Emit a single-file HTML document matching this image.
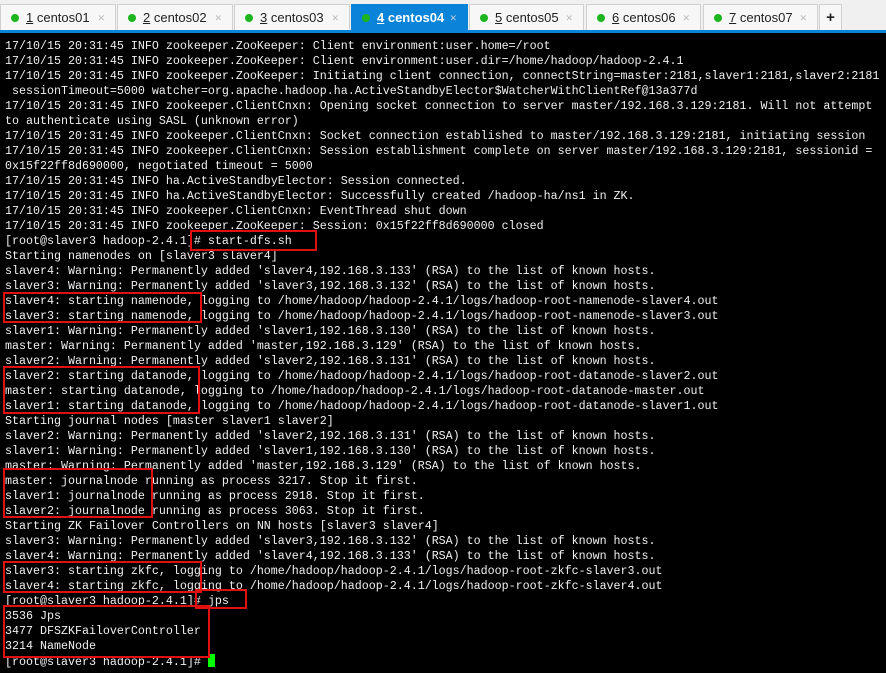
<!DOCTYPE html>
<html><head><meta charset="utf-8"><style>
body{margin:0;width:886px;height:673px;overflow:hidden;background:#000;position:relative;font-family:"Liberation Sans",sans-serif}
.bar{position:absolute;left:0;top:0;width:886px;height:30px;background:#f0f0f0}
.tab{position:absolute;top:4px;height:26px;background:#f7f7f7;border:1px solid #d0d0d0;border-bottom:none;box-sizing:border-box;font-size:13px;color:#222;line-height:26px}
.tab .d{position:absolute;left:10px;top:9px;width:8px;height:8px;border-radius:50%;background:#1db51d}
.tab .t{position:absolute;left:25px}
.tab .x{position:absolute;right:10px;color:#bbb;font-size:9px}
.tab.a{background:#0a84d8;border-color:#0a84d8;color:#fff;font-weight:bold}
.tab.a .x{color:#bcd;font-weight:normal}
.blue{position:absolute;left:0;top:30px;width:886px;height:3px;background:#0a84d8}
pre{position:absolute;left:5px;top:39px;margin:0;font-family:"Liberation Mono",monospace;font-size:11.67px;line-height:15px;color:#f0f0f0;white-space:pre}
.b{position:absolute;border:2px solid #e01010;box-sizing:border-box}
.cur{display:inline-block;width:7px;height:13px;background:#00ff00;vertical-align:-2px}
</style></head><body>
<div class="bar"></div>
<div class="tab" style="left:0;width:116px"><span class="d"></span><span class="t"><u>1</u> centos01</span><span class="x">✕</span></div>
<div class="tab" style="left:117px;width:116px"><span class="d"></span><span class="t"><u>2</u> centos02</span><span class="x">✕</span></div>
<div class="tab" style="left:234px;width:116px"><span class="d"></span><span class="t"><u>3</u> centos03</span><span class="x">✕</span></div>
<div class="tab a" style="left:351px;width:117px"><span class="d"></span><span class="t"><u>4</u> centos04</span><span class="x">✕</span></div>
<div class="tab" style="left:469px;width:115px"><span class="d"></span><span class="t"><u>5</u> centos05</span><span class="x">✕</span></div>
<div class="tab" style="left:586px;width:115px"><span class="d"></span><span class="t"><u>6</u> centos06</span><span class="x">✕</span></div>
<div class="tab" style="left:703px;width:115px"><span class="d"></span><span class="t"><u>7</u> centos07</span><span class="x">✕</span></div>
<div class="tab" style="left:819px;width:23px;text-align:center;font-weight:bold;font-size:15px">+</div>
<div class="blue"></div>
<pre>17/10/15 20:31:45 INFO zookeeper.ZooKeeper: Client environment:user.home=/root
17/10/15 20:31:45 INFO zookeeper.ZooKeeper: Client environment:user.dir=/home/hadoop/hadoop-2.4.1
17/10/15 20:31:45 INFO zookeeper.ZooKeeper: Initiating client connection, connectString=master:2181,slaver1:2181,slaver2:2181
 sessionTimeout=5000 watcher=org.apache.hadoop.ha.ActiveStandbyElector$WatcherWithClientRef@13a377d
17/10/15 20:31:45 INFO zookeeper.ClientCnxn: Opening socket connection to server master/192.168.3.129:2181. Will not attempt
to authenticate using SASL (unknown error)
17/10/15 20:31:45 INFO zookeeper.ClientCnxn: Socket connection established to master/192.168.3.129:2181, initiating session
17/10/15 20:31:45 INFO zookeeper.ClientCnxn: Session establishment complete on server master/192.168.3.129:2181, sessionid =
0x15f22ff8d690000, negotiated timeout = 5000
17/10/15 20:31:45 INFO ha.ActiveStandbyElector: Session connected.
17/10/15 20:31:45 INFO ha.ActiveStandbyElector: Successfully created /hadoop-ha/ns1 in ZK.
17/10/15 20:31:45 INFO zookeeper.ClientCnxn: EventThread shut down
17/10/15 20:31:45 INFO zookeeper.ZooKeeper: Session: 0x15f22ff8d690000 closed
[root@slaver3 hadoop-2.4.1]# start-dfs.sh
Starting namenodes on [slaver3 slaver4]
slaver4: Warning: Permanently added 'slaver4,192.168.3.133' (RSA) to the list of known hosts.
slaver3: Warning: Permanently added 'slaver3,192.168.3.132' (RSA) to the list of known hosts.
slaver4: starting namenode, logging to /home/hadoop/hadoop-2.4.1/logs/hadoop-root-namenode-slaver4.out
slaver3: starting namenode, logging to /home/hadoop/hadoop-2.4.1/logs/hadoop-root-namenode-slaver3.out
slaver1: Warning: Permanently added 'slaver1,192.168.3.130' (RSA) to the list of known hosts.
master: Warning: Permanently added 'master,192.168.3.129' (RSA) to the list of known hosts.
slaver2: Warning: Permanently added 'slaver2,192.168.3.131' (RSA) to the list of known hosts.
slaver2: starting datanode, logging to /home/hadoop/hadoop-2.4.1/logs/hadoop-root-datanode-slaver2.out
master: starting datanode, logging to /home/hadoop/hadoop-2.4.1/logs/hadoop-root-datanode-master.out
slaver1: starting datanode, logging to /home/hadoop/hadoop-2.4.1/logs/hadoop-root-datanode-slaver1.out
Starting journal nodes [master slaver1 slaver2]
slaver2: Warning: Permanently added 'slaver2,192.168.3.131' (RSA) to the list of known hosts.
slaver1: Warning: Permanently added 'slaver1,192.168.3.130' (RSA) to the list of known hosts.
master: Warning: Permanently added 'master,192.168.3.129' (RSA) to the list of known hosts.
master: journalnode running as process 3217. Stop it first.
slaver1: journalnode running as process 2918. Stop it first.
slaver2: journalnode running as process 3063. Stop it first.
Starting ZK Failover Controllers on NN hosts [slaver3 slaver4]
slaver3: Warning: Permanently added 'slaver3,192.168.3.132' (RSA) to the list of known hosts.
slaver4: Warning: Permanently added 'slaver4,192.168.3.133' (RSA) to the list of known hosts.
slaver3: starting zkfc, logging to /home/hadoop/hadoop-2.4.1/logs/hadoop-root-zkfc-slaver3.out
slaver4: starting zkfc, logging to /home/hadoop/hadoop-2.4.1/logs/hadoop-root-zkfc-slaver4.out
[root@slaver3 hadoop-2.4.1]# jps
3536 Jps
3477 DFSZKFailoverController
3214 NameNode
[root@slaver3 hadoop-2.4.1]# <span class="cur"></span></pre>
<div class="b" style="left:190px;top:230px;width:127px;height:21px"></div>
<div class="b" style="left:3px;top:292px;width:199px;height:31px"></div>
<div class="b" style="left:3px;top:366px;width:197px;height:48px"></div>
<div class="b" style="left:3px;top:468px;width:150px;height:50px"></div>
<div class="b" style="left:3px;top:561px;width:199px;height:32px"></div>
<div class="b" style="left:195px;top:589px;width:52px;height:20px"></div>
<div class="b" style="left:3px;top:605px;width:207px;height:53px"></div>
</body></html>
